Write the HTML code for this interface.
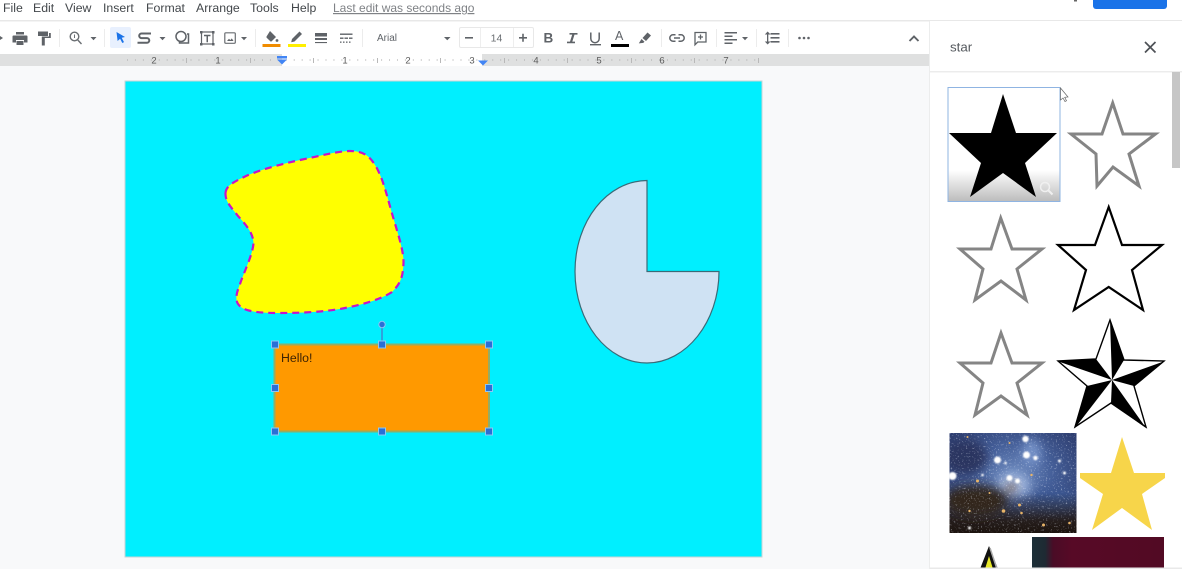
<!DOCTYPE html>
<html><head><meta charset="utf-8">
<style>
html,body{margin:0;padding:0;width:1182px;height:569px;overflow:hidden;background:#f8f9fa}
svg{position:absolute;left:0;top:0}
text{font-family:"Liberation Sans",sans-serif}
</style></head>
<body>
<svg width="1182" height="569" viewBox="0 0 1182 569" xmlns="http://www.w3.org/2000/svg">
<defs>
<linearGradient id="fade" x1="0" y1="0" x2="0" y2="1"><stop offset="0" stop-color="#fff"/><stop offset="1" stop-color="#bdbdbd"/></linearGradient>
<linearGradient id="redl" x1="0" y1="0" x2="1" y2="0"><stop offset="0" stop-color="#1d2f38"/><stop offset="0.1" stop-color="#1e2a33"/><stop offset="0.16" stop-color="#4a0c26"/><stop offset="0.3" stop-color="#570a26"/><stop offset="1" stop-color="#520a24"/></linearGradient>
<radialGradient id="neb" cx="0.5" cy="0.42" r="0.62"><stop offset="0" stop-color="#6f8cc0"/><stop offset="0.5" stop-color="#455f99"/><stop offset="1" stop-color="#2e3e70"/></radialGradient>
<linearGradient id="nebb" x1="0" y1="0" x2="0" y2="1"><stop offset="0.6" stop-color="#241a14" stop-opacity="0"/><stop offset="0.88" stop-color="#241a14" stop-opacity=".92"/><stop offset="1" stop-color="#1c130e"/></linearGradient>
<filter id="b1"><feGaussianBlur stdDeviation="0.9"/></filter>
<filter id="b2" x="-50%" y="-50%" width="200%" height="200%"><feGaussianBlur stdDeviation="5"/></filter>
<filter id="b3" x="-5%" y="-5%" width="110%" height="110%"><feGaussianBlur stdDeviation="0.35"/></filter>
<filter id="speck" x="0" y="0" width="100%" height="100%"><feTurbulence type="fractalNoise" baseFrequency="0.6" numOctaves="2" seed="7"/><feColorMatrix type="matrix" values="0 0 0 0 0.85  0 0 0 0 0.9  0 0 0 0 1  0 0 6 0 -3.7"/><feGaussianBlur stdDeviation="0.35"/></filter>
</defs>

<rect x="0" y="0" width="1182" height="21" fill="#fff"/>
<rect x="0" y="20" width="1182" height="1.500" fill="#e8e8e8"/>
<rect x="0" y="21.500" width="929" height="32.500" fill="#fff"/>

<g filter="url(#b3)">
<g font-size="12.300" fill="#43474b">
<text x="3" y="12">File</text><text x="33" y="12">Edit</text><text x="65" y="12">View</text><text x="103" y="12">Insert</text><text x="146" y="12">Format</text><text x="196" y="12">Arrange</text><text x="250" y="12">Tools</text><text x="291" y="12">Help</text>
</g>
<text x="333" y="12" font-size="12" fill="#7f8286" text-decoration="underline">Last edit was seconds ago</text>

<g fill="#ececec">
<rect x="59" y="29" width="1" height="18"/><rect x="104" y="29" width="1" height="18"/><rect x="255" y="29" width="1" height="18"/><rect x="362" y="29" width="1" height="18"/><rect x="661" y="29" width="1" height="18"/><rect x="716" y="29" width="1" height="18"/><rect x="756" y="29" width="1" height="18"/><rect x="788" y="29" width="1" height="18"/>
</g>
<g fill="#5f6368" stroke="none">
<path d="M0 36l3 2-3 2z"/>
<path d="M16 32h8v2.500h-8zM13.500 35.500h13a1 1 0 0 1 1 1v6h-3.500v-2.500h-8v2.500h-3.500v-6a1 1 0 0 1 1-1z"/><rect x="16.500" y="41" width="7" height="4"/>
<path d="M38 31.500h10v4.500h-10zM49 33h1.800v5h-6v7.500h-3v-9h7.200z"/>
<path d="M90.500 37h6l-3 3.200zM159.500 37h6l-3 3.200zM241 37h6l-3 3.200zM444 37h6.500l-3.250 3.200zM742 37h6l-3 3.200z"/>
</g>
<g fill="none" stroke="#6a6e72" stroke-width="1.400"><circle cx="74.500" cy="36.500" r="4.300"/><path d="M77.800 40l3.700 4"/><path d="M74.500 34.500v3.500" stroke-width="1"/></g>
<rect x="110" y="27" width="21" height="21" rx="2" fill="#e8f0fe"/>
<path d="M116.500 32l8.500 5-3.300.8 2.300 4.300-1.700.9-2.200-4.300-2.500 2.300z" fill="#1a73e8"/>
<path d="M151 33.500h-9.500a2.300 2.300 0 0 0 0 4.600h5.500a2.300 2.300 0 0 1 0 4.600h-9.500" fill="none" stroke="#5f6368" stroke-width="2"/>
<g fill="none" stroke="#5f6368" stroke-width="1.500"><circle cx="181" cy="36.500" r="5"/><path d="M187 34h1.500v9h-9v-1.500"/></g>
<rect x="201.500" y="32" width="11.500" height="12" fill="none" stroke="#5f6368" stroke-width="1.200"/>
<g fill="#5f6368"><rect x="200" y="31" width="2.500" height="2.500"/><rect x="212" y="31" width="2.500" height="2.500"/><rect x="200" y="43" width="2.500" height="2.500"/><rect x="212" y="43" width="2.500" height="2.500"/><path d="M204 34.700h6.500v1.500h-2.500v6h-1.500v-6h-2.500z"/></g>
<rect x="224.800" y="32.800" width="10.500" height="10.500" rx="1" fill="none" stroke="#6a6e72" stroke-width="1.200"/><path d="M227 41l2-2.300 1.300 1.400 1.500-1.700 1.700 2.600z" fill="#5f6368"/>
<path d="M270 31l6 6-4.300 4.300a1 1 0 0 1-1.400 0l-3.600-3.600a1 1 0 0 1 0-1.400z" fill="#5f6368"/><circle cx="277" cy="40.500" r="1.400" fill="#5f6368"/>
<rect x="262.500" y="44" width="18" height="3" fill="#f08c00"/>
<path d="M299.500 31.500l2.500 2.500-7.500 7.500-3.300.8.800-3.300z" fill="#5f6368"/>
<rect x="288" y="44" width="18" height="3" fill="#ffef00"/>
<g fill="#5f6368"><rect x="315" y="33" width="12" height="3.500"/><rect x="315" y="38" width="12" height="2"/><rect x="315" y="42" width="12" height="1.100"/>
<rect x="340" y="33.500" width="12.500" height="1.400"/><rect x="340" y="37.500" width="3.500" height="1.400"/><rect x="344.500" y="37.500" width="3.500" height="1.400"/><rect x="349" y="37.500" width="3.500" height="1.400"/><rect x="340" y="41.500" width="1.500" height="1.300"/><rect x="343" y="41.500" width="1.500" height="1.300"/><rect x="346" y="41.500" width="1.500" height="1.300"/><rect x="349" y="41.500" width="1.500" height="1.300"/></g>
<text x="377" y="41" font-size="10" fill="#5f6368">Arial</text>
<rect x="459.500" y="27.500" width="74" height="20" rx="1.500" fill="#fff" stroke="#e8e8e8"/>
<path d="M480.500 28v19M513.500 28v19" stroke="#eeeeee"/>
<rect x="465" y="37" width="8" height="1.600" fill="#5f6368"/>
<path d="M519 37h8v1.600h-8zM522.200 33.800h1.600v8h-1.600z" fill="#5f6368"/>
<text x="496.500" y="41.500" font-size="10.500" fill="#6a6e72" text-anchor="middle">14</text>
<text x="543.500" y="42.500" font-size="13.500" font-weight="bold" fill="#5f6368">B</text>
<path d="M569.500 33h8v1.600h-3l-2.200 7h2.700v1.600h-8v-1.600h3l2.200-7h-2.700z" fill="#5f6368"/>
<path d="M590.800 32.500v6a4.200 4.200 0 0 0 8.400 0v-6" fill="none" stroke="#5f6368" stroke-width="1.500"/><rect x="590" y="44" width="11" height="1.400" fill="#5f6368"/>
<text x="615" y="40" font-size="12.500" fill="#5f6368">A</text><rect x="611" y="44" width="18" height="3" fill="#000"/>
<path d="M647.500 32.500l3.500 3-5 5.500-3.500-3zM641.500 39l3 2.700-1.200 1.200-4.500.5z" fill="#5f6368"/>
<g fill="none" stroke="#5f6368" stroke-width="1.500"><path d="M675.500 34.800h-2.500a3.200 3.200 0 0 0 0 6.400h2.500M678.500 34.800h2.500a3.200 3.200 0 0 1 0 6.400h-2.500M674 38h6"/></g>
<path d="M695 32.500h11v9.500h-8.300l-2.700 2.800z" fill="none" stroke="#5f6368" stroke-width="1.300"/><path d="M700.500 34.500v5M698 37h5" stroke="#5f6368" stroke-width="1.300"/>
<g fill="#5f6368"><rect x="724.500" y="32" width="12.500" height="1.500"/><rect x="724.500" y="35.500" width="8" height="1.500"/><rect x="724.500" y="39" width="12.500" height="1.500"/><rect x="724.500" y="42.500" width="8" height="1.500"/></g>
<g fill="#5f6368"><rect x="770.500" y="33" width="9" height="1.600"/><rect x="770.500" y="37" width="9" height="1.600"/><rect x="770.500" y="41" width="9" height="1.600"/><rect x="767" y="33" width="1.300" height="10"/><path d="M764.800 34.500l2.850-3 2.850 3zM764.800 41.500l2.850 3 2.850-3z"/></g>
<g fill="#5f6368"><circle cx="799.500" cy="38" r="1.300"/><circle cx="804" cy="38" r="1.300"/><circle cx="808.500" cy="38" r="1.300"/></g>
<path d="M909.500 41l4.500-4.500 4.500 4.500" fill="none" stroke="#5f6368" stroke-width="1.900"/>
</g>

<!-- ruler -->
<rect x="0" y="54" width="929" height="12" fill="#dfe0e0"/>
<rect x="282" y="54" width="200" height="12" fill="#fff"/>
<line x1="127" y1="60" x2="758" y2="60" stroke="#b4b4b4" stroke-width="1.200" stroke-dasharray="1 6.940"/>
<g fill="#b8b8b8"><rect x="186" y="58" width="1" height="5"/><rect x="250" y="58" width="1" height="5"/><rect x="313" y="58" width="1" height="5"/><rect x="377" y="58" width="1" height="5"/><rect x="440" y="58" width="1" height="5"/><rect x="504" y="58" width="1" height="5"/><rect x="567" y="58" width="1" height="5"/><rect x="631" y="58" width="1" height="5"/><rect x="694" y="58" width="1" height="5"/><rect x="758" y="58" width="1" height="5"/></g>
<g font-size="9.500" fill="#5a5a5a" text-anchor="middle">
<text x="154" y="63.500">2</text><text x="218" y="63.500">1</text><text x="345" y="63.500">1</text><text x="408" y="63.500">2</text><text x="472" y="63.500">3</text><text x="536" y="63.500">4</text><text x="599" y="63.500">5</text><text x="662" y="63.500">6</text><text x="726" y="63.500">7</text>
</g>
<rect x="277" y="56" width="10" height="2.500" fill="#4285f4"/><path d="M277 59.500h10l-5 5z" fill="#4285f4"/>
<path d="M478 60.500h10l-5 5z" fill="#4285f4"/>

<!-- canvas -->
<rect x="125" y="81" width="637" height="476" fill="#00efff" stroke="#c9d4d6" stroke-width="1"/>

<!-- blob -->
<path d="M225.500 193C226 185 236 181 246 176C262 169 282 164 300 160C320 156 338 151 350 151C362 151 369 155 375 165C382 176 386 192 391 210C396 228 404 250 403.500 263C403 278 400 284 392 292C380 300 360 305 345 308C325 312 300 313 280 313C262 313 247 312 241 307C234 302 236 294 240 284C244 272 253 254 253.500 243C253 232 245 224 238 216C232 208 225 202 225.500 193Z" fill="#ffff00" stroke="#c814c8" stroke-width="2.200" stroke-dasharray="7 5"/>

<!-- pie -->
<path d="M647 180.500V271.500H719C719 322 686 363 647 363C607 363 575 322 575 271.500C575 221 607 181 647 180.500Z" fill="#cfe2f3" stroke="#3a6b78" stroke-width="1.200"/>

<!-- orange -->
<rect x="274.500" y="344.500" width="214.500" height="87" fill="#ff9900" stroke="#93ad66" stroke-width="2"/>
<text x="281" y="362" font-size="12.300" fill="#3d2304">Hello!</text>
<rect x="381" y="327" width="2" height="16" fill="#2fa2dc"/>
<circle cx="382" cy="324.500" r="3.200" fill="#2a6fd6" stroke="#8cc4f2" stroke-width="1"/>
<g fill="#2a6fd6" stroke="#8cc8f5" stroke-width="1">
<rect x="271.500" y="341" width="7" height="7"/><rect x="378.500" y="341" width="7" height="7"/><rect x="485.500" y="341" width="7" height="7"/>
<rect x="271.500" y="384.500" width="7" height="7"/><rect x="485.500" y="384.500" width="7" height="7"/>
<rect x="271.500" y="428" width="7" height="7"/><rect x="378.500" y="428" width="7" height="7"/><rect x="485.500" y="428" width="7" height="7"/>
</g>

<!-- sidebar -->
<rect x="929" y="21" width="253" height="548" fill="#fff"/>
<rect x="929" y="21" width="1" height="548" fill="#eceded"/>
<rect x="930" y="71" width="252" height="1.500" fill="#ececec"/>
<rect x="1093" y="-4" width="74" height="13" rx="3" fill="#1a73e8"/>
<rect x="1074" y="0" width="3" height="1.500" fill="#666"/>
<text x="950" y="51.500" font-size="13.300" fill="#55595e">star</text>
<path d="M1145 42l10.500 10.500M1155.500 42l-10.500 10.500" stroke="#4d5156" stroke-width="1.700" fill="none"/>
<rect x="1172" y="72" width="8" height="96" fill="#c6c6c6"/>

<!-- selected black star -->
<rect x="948" y="87.500" width="112" height="114" fill="#fff" stroke="#8fb4e2" stroke-width="1"/>
<rect x="948.500" y="170" width="111" height="31" fill="url(#fade)"/>
<polygon points="1003,94 1016,133 1057,133 1025,163 1036,197 1003,173 970,197 981,163 949,133 991,133" fill="#000"/>
<circle cx="1045" cy="187" r="4.500" fill="none" stroke="#f0f0f0" stroke-width="1.500"/><path d="M1048.500 190.500l4 4" stroke="#f0f0f0" stroke-width="2"/>

<path d="M1060.500 88v12l2.500-2 2 3.500 1.500-.8-1.800-3.400 3.300-.3z" fill="#fff" stroke="#666" stroke-width=".7"/>

<!-- gray stars -->
<g fill="none" stroke="#858585" stroke-width="3" stroke-linejoin="miter">
<polygon points="1112.700,103 1123,134 1155.500,134 1129,154 1139,186 1113,167 1097,186 1096,154 1071,134 1102,134"/>
<polygon points="1000.700,218 1012,249 1042,249 1017,269 1026,300 1001,281 975,300 983,269 960,249 991,249"/>
<polygon points="1001,333 1012,363 1042,363 1017,383 1027,415 1001,396 975,415 983,383 960,363 991,363"/>
</g>
<polygon points="1108.700,207 1122,245 1162,245 1132,270 1143,310 1108.700,287 1074,310 1086,270 1058,245 1095,245" fill="#fff" stroke="#000" stroke-width="2.200"/>
<!-- nautical star -->
<polygon points="1110,320 1124,360 1164,361 1134,386 1146,427 1111,403 1075,427 1087,386 1058,361 1096,359" fill="#fff" stroke="#000" stroke-width="1.400"/>
<g fill="#000">
<polygon points="1110,320 1124,360 1112,380"/>
<polygon points="1165,361 1134,386 1112,380"/>
<polygon points="1146,428 1111,403 1112,380"/>
<polygon points="1075,428 1087,386 1112,380"/>
<polygon points="1057,361 1096,359 1112,380"/>
</g>

<!-- nebula -->
<svg x="949.500" y="433" width="127" height="100" viewBox="0 0 127 100">
<rect width="127" height="100" fill="url(#neb)"/>
<g filter="url(#b2)">
<ellipse cx="64" cy="52" rx="16" ry="11" fill="#a4bae0"/>
<ellipse cx="82" cy="20" rx="10" ry="14" fill="#7390c6"/>
<ellipse cx="16" cy="24" rx="22" ry="18" fill="#2c3460"/>
<ellipse cx="105" cy="70" rx="24" ry="14" fill="#3a5792"/>
</g>
<rect width="127" height="100" fill="url(#nebb)"/>
<g filter="url(#b2)">
<ellipse cx="26" cy="68" rx="32" ry="16" fill="#33261e"/>
<ellipse cx="62" cy="55" rx="4" ry="5" fill="#5a3520"/>
</g>
<rect width="127" height="100" filter="url(#speck)" opacity=".42"/>
<g fill="#fff" filter="url(#b1)">
<circle cx="76" cy="6" r="3.200"/><circle cx="48" cy="27" r="3.500"/><circle cx="77" cy="22" r="3.500"/><circle cx="86" cy="25" r="2.200"/><circle cx="3" cy="43" r="4"/><circle cx="60" cy="45" r="3"/><circle cx="68" cy="48" r="2.500"/><circle cx="110" cy="28" r="1.500"/><circle cx="115" cy="40" r="1.500"/><circle cx="20" cy="95" r="1.500"/><circle cx="33" cy="42" r="1.300"/><circle cx="56" cy="30" r="1.300"/>
</g>
<g fill="#e8b468" filter="url(#b3)">
<circle cx="70" cy="72" r="1.500"/><circle cx="54" cy="78" r="1.800"/><circle cx="72" cy="80" r="1.300"/><circle cx="94" cy="92" r="1.500"/><circle cx="120" cy="90" r="1.300"/><circle cx="28" cy="48" r="1.500"/><circle cx="82" cy="42" r="1.200"/><circle cx="20" cy="78" r="1.200"/><circle cx="40" cy="60" r="1"/><circle cx="60" cy="10" r="1"/><circle cx="18" cy="4" r="1"/>
</g>
</svg>

<!-- yellow star -->
<polygon points="1122,437 1134,473 1165,473 1165,478 1142,494 1152,530 1122,508 1092,530 1103,494 1080,478 1080,473 1111,473" fill="#f7d54a"/>

<polygon points="989,546 998,569 980,569" fill="#111"/>
<polygon points="989,556 993,569 985,569" fill="#e8e82a"/>
<path d="M990 548l7 21" stroke="#aaa" stroke-width="1.500" fill="none"/>

<rect x="1032" y="537" width="132" height="32" fill="url(#redl)"/>
<rect x="930" y="567.500" width="252" height="1.500" fill="#e9e9e9"/>
</svg>
</body></html>
